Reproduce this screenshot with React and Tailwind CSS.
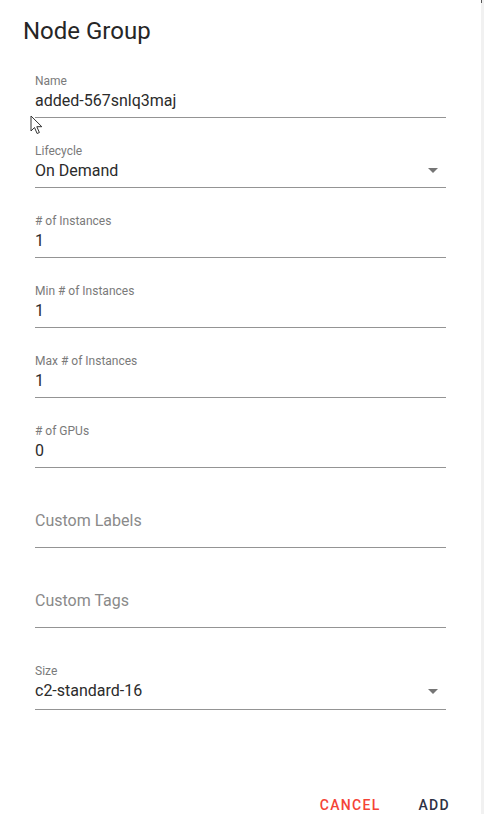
import React from 'react';

const ArrowDown = ({ className }) => (
  <svg className={className} width="10" height="5" viewBox="0 0 10 5">
    <path d="M0 0l5 5 5-5z" fill="#757575" />
  </svg>
);

const Field = ({ label, value, select, arrowClass, className }) => (
  <div className={`relative w-[411px] border-b border-[#949494] ${className}`}>
    <div className="text-[12px] leading-[16px] text-[#7a7a7a]">{label}</div>
    <div className="text-[16px] leading-[24px] text-[#2b2b2b]">{value}</div>
    {select && <ArrowDown className={`absolute right-[8px] ${arrowClass}`} />}
  </div>
);

const EmptyField = ({ placeholder }) => (
  <div className="w-[411px] border-b border-[#949494] mt-[41px] pb-[14px]">
    <div className="text-[16px] leading-[24px] text-[#8a8a8a]">{placeholder}</div>
  </div>
);

const Cursor = () => (
  <svg
    className="absolute left-[30px] top-[115px]"
    width="14"
    height="20"
    viewBox="0 0 14 20"
  >
    <path
      d="M1 1v15l3.5-3.5 2.6 6 2.3-1-2.6-5.8h5z"
      fill="#ffffff"
      stroke="#333333"
      strokeWidth="1"
      strokeLinejoin="round"
    />
  </svg>
);

export default function App() {
  return (
    <div className="relative w-[484px] h-[814px] bg-white flex overflow-hidden font-['Roboto',sans-serif]">
      <div className="w-[481px] flex flex-col">
        {/* Title */}
        <h2 className="pt-[15px] pl-[23px] text-[24px] leading-[32px] font-normal text-[#262626]">
          Node Group
        </h2>

        {/* Form */}
        <div className="pl-[35px] flex flex-col">
          <Field className="mt-[26px] pb-[4px]" label="Name" value="added-567snlq3maj" />
          <Field
            className="mt-[25px] pb-[4px]"
            label="Lifecycle"
            value="On Demand"
            select
            arrowClass="bottom-[14px]"
          />
          <Field className="mt-[25px] pb-[4px]" label="# of Instances" value="1" />
          <Field className="mt-[25px] pb-[4px]" label="Min # of Instances" value="1" />
          <Field className="mt-[25px] pb-[4px]" label="Max # of Instances" value="1" />
          <Field className="mt-[25px] pb-[4px]" label="# of GPUs" value="0" />
          <EmptyField placeholder="Custom Labels" />
          <EmptyField placeholder="Custom Tags" />
          <Field
            className="mt-[35px] pb-[6px]"
            label="Size"
            value="c2-standard-16"
            select
            arrowClass="bottom-[15px]"
          />
        </div>

        {/* Actions */}
        <div className="mt-auto flex justify-end items-center pr-[31px] gap-[38px] h-[20px] translate-y-[1px]">
          <button className="text-[14px] leading-[20px] font-medium tracking-[1.3px] text-[#f44336]">
            CANCEL
          </button>
          <button className="text-[14px] leading-[20px] font-medium tracking-[1.3px] text-[#2e3245]">
            ADD
          </button>
        </div>
      </div>

      {/* right edge */}
      <div className="w-[3px] bg-[#f1f1f1] flex flex-col">
        <div className="w-[1px] h-[3px] bg-[#555555]" />
      </div>

      <Cursor />
    </div>
  );
}
